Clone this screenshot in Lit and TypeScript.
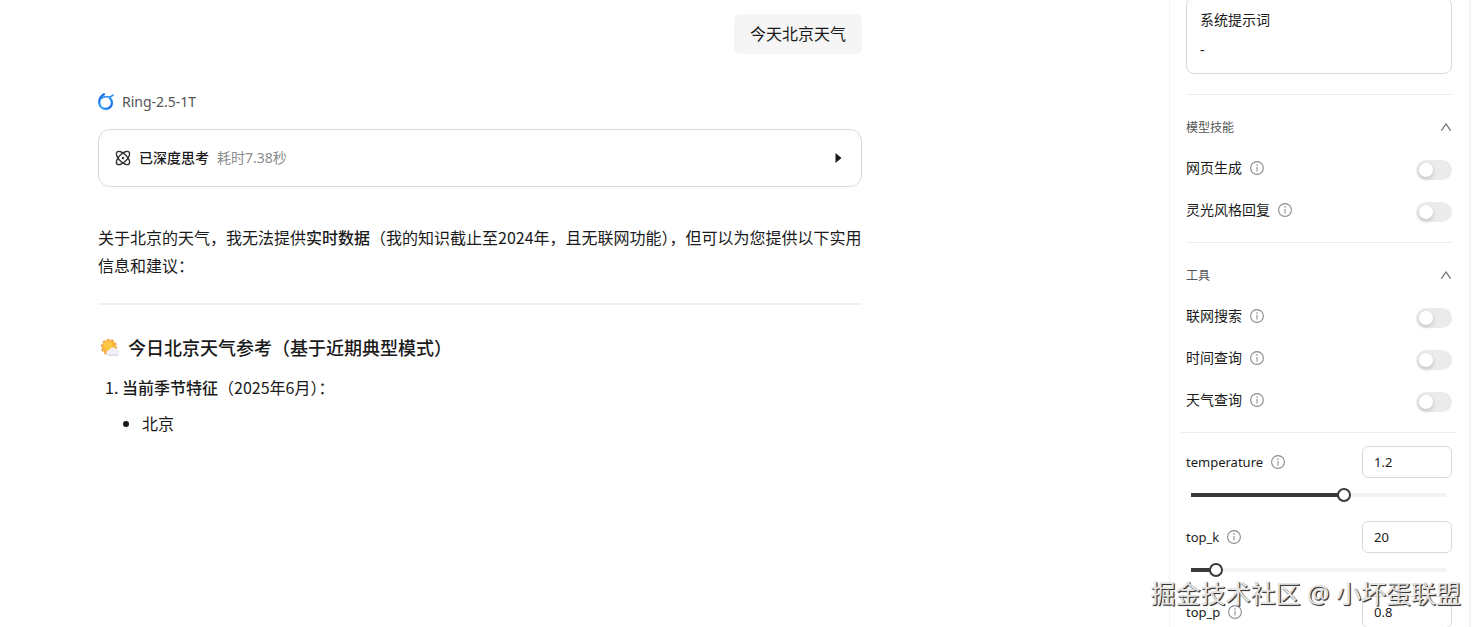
import { LitElement, html, css, svg } from "lit";
import { customElement, property, state } from "lit/decorators.js";

const infoIcon = html`<svg class="info" viewBox="0 0 14 14" aria-hidden="true">
  <circle cx="7" cy="7" r="6.4" fill="none" stroke="currentColor" stroke-width="1.1" />
  <rect x="6.45" y="6" width="1.1" height="4.4" fill="currentColor" />
  <circle cx="7" cy="4.1" r=".8" fill="currentColor" />
</svg>`;

const infoStyles = css`
  .info {
    width: 14px;
    height: 14px;
    flex: none;
    color: #8c8c8c;
  }
`;

@customElement("toggle-row")
class ToggleRow extends LitElement {
  @property() label = "";

  static styles = [
    infoStyles,
    css`
      :host {
        display: block;
      }
      .row {
        display: flex;
        align-items: center;
        gap: 8px;
        height: 42px;
        color: #1a1a1a;
        font-size: 14px;
        line-height: 22px;
      }
      .switch {
        appearance: none;
        flex: none;
        display: flex;
        align-items: center;
        width: 36px;
        height: 20px;
        margin: 4px 0 0 auto;
        padding: 0 3px;
        box-sizing: border-box;
        border-radius: 10px;
        background: #ebebeb;
        cursor: pointer;
      }
      .switch::before {
        content: "";
        width: 14px;
        height: 14px;
        border-radius: 50%;
        background: #fff;
        box-shadow: 0 2px 4px rgba(0, 35, 11, 0.2);
      }
      .switch:checked {
        justify-content: flex-end;
        background: #3a3a3a;
      }
    `,
  ];

  render() {
    return html`<div class="row">
      <label for="toggle">${this.label}</label>${infoIcon}
      <input id="toggle" class="switch" type="checkbox" role="switch" />
    </div>`;
  }
}

@customElement("param-row")
class ParamRow extends LitElement {
  @property() label = "";
  @property({ type: Number }) value = 0;
  @property({ type: Number }) max = 1;
  @property({ type: Number }) step = 0.1;

  static styles = [
    infoStyles,
    css`
      :host {
        display: block;
        height: 75px;
      }
      .row {
        display: flex;
        align-items: center;
        gap: 8px;
        color: #1a1a1a;
        font-size: 13px;
      }
      .number {
        width: 90px;
        height: 32px;
        box-sizing: border-box;
        margin-left: auto;
        padding: 0 11px;
        border: 1px solid #d9d9d9;
        border-radius: 6px;
        background: #fff;
        color: #1a1a1a;
        font: inherit;
      }
      .range {
        appearance: none;
        display: block;
        width: 100%;
        height: 14px;
        margin: 10px 0 0;
        background: none;
      }
      .range::-webkit-slider-runnable-track {
        height: 4px;
        background: linear-gradient(to right, #3a3a3a var(--fill), #f3f3f3 var(--fill)) center / calc(100% - 10px) 4px
          no-repeat;
      }
      .range::-webkit-slider-thumb {
        appearance: none;
        width: 14px;
        height: 14px;
        box-sizing: border-box;
        margin-top: -5px;
        border: 2px solid #3a3a3a;
        border-radius: 50%;
        background: #fff;
      }
    `,
  ];

  private onSlide(e: Event) {
    this.value = Number((e.target as HTMLInputElement).value);
  }

  render() {
    return html`<div class="row">
        <label for="number">${this.label}</label>${infoIcon}
        <input id="number" class="number" type="text" inputmode="decimal" .value=${String(this.value)} @change=${this.onSlide} />
      </div>
      <input
        class="range"
        type="range"
        aria-label=${this.label}
        min="0"
        max=${this.max}
        step=${this.step}
        .value=${String(this.value)}
        style="--fill: ${(this.value / this.max) * 100}%"
        @input=${this.onSlide}
      />`;
  }
}

@customElement("panel-section")
class PanelSection extends LitElement {
  @property() heading = "";
  @state() private open = true;

  static styles = css`
    :host {
      display: block;
      padding: 20px 0 11px;
      border-top: 1px solid #ededed;
    }
    .head {
      display: flex;
      align-items: center;
      justify-content: space-between;
      width: 100%;
      height: 24px;
      margin: 0 0 8px;
      padding: 0;
      border: 0;
      background: none;
      color: #555;
      font: inherit;
      font-size: 12px;
      cursor: pointer;
    }
    .chevron {
      width: 12px;
      height: 12px;
    }
  `;

  render() {
    return html`<button class="head" aria-expanded=${this.open} @click=${() => (this.open = !this.open)}>
        <span>${this.heading}</span>
        <svg class="chevron" viewBox="0 0 12 12" aria-hidden="true">
          <path d="M1.4 9.6 6 3l4.6 6.6" fill="none" stroke="#666" stroke-width="1.1" />
        </svg>
      </button>
      ${this.open ? html`<slot></slot>` : null}`;
  }
}

const orbit = (angle: number) =>
  svg`<ellipse cx="8" cy="8" rx="8.5" ry="4" transform="rotate(${angle} 8 8)" />`;

@customElement("app-root")
class AppRoot extends LitElement {
  static styles = css`
    :host {
      display: block;
      position: relative;
      height: 100vh;
      overflow: hidden;
      background: #fff;
      color: #1a1a1a;
      font-family: "Noto Sans", "Noto Sans CJK SC", sans-serif;
      font-size: 16px;
    }
    .layout {
      display: flex;
    }
    .chat {
      flex: 1;
      min-width: 0;
      display: flex;
      flex-direction: column;
      padding: 14px 307px 0 98px;
    }
    .bubble {
      align-self: flex-end;
      padding: 8px 16px;
      border-radius: 6px;
      background: #f5f5f5;
      line-height: 24px;
    }
    .model {
      display: flex;
      align-items: center;
      gap: 8px;
      margin-top: 37px;
      color: #555;
      font-size: 14px;
      line-height: 22px;
    }
    .ring {
      width: 16px;
      height: 18px;
    }
    .thinking {
      display: flex;
      align-items: center;
      gap: 8px;
      height: 58px;
      box-sizing: border-box;
      margin: 16px 0 0;
      padding: 0 19px 0 16px;
      border: 1px solid #d9d9d9;
      border-radius: 12px;
      background: #fff;
      color: #1a1a1a;
      font: inherit;
      font-size: 14px;
      line-height: 22px;
    }
    .atom {
      width: 16px;
      height: 16px;
    }
    .thinking-title {
      font-weight: 500;
    }
    .thinking-time {
      color: #8c8c8c;
    }
    .arrow {
      width: 7px;
      height: 10px;
      margin-left: auto;
    }
    .answer {
      font-family: "Noto Sans CJK SC", sans-serif;
      line-height: 28px;
    }
    .answer p {
      margin: 36px 0 24px;
    }
    .answer hr {
      margin: 0;
      border: 0;
      border-top: 2px solid #f0f0f0;
    }
    .answer h3 {
      display: flex;
      align-items: center;
      gap: 8px;
      margin: 28px 0 12px;
      font-size: 18px;
      font-weight: 500;
    }
    .weather {
      width: 22px;
      height: 22px;
    }
    strong {
      font-weight: 500;
    }
    .answer ol {
      margin: 0;
      padding-left: 24px;
    }
    .answer ul {
      margin: 8px 0 0;
      padding-left: 20px;
      list-style: disc;
    }
    .panel {
      flex: none;
      width: 302px;
      box-sizing: border-box;
      margin-right: 10px;
      padding: 0 17px 0 16px;
      border: solid #f3f3f3;
      border-width: 0 2px 0 1px;
      min-height: 100vh;
    }
    .prompt {
      height: 77px;
      box-sizing: border-box;
      margin: -3px 0 20px;
      padding: 11px 13px;
      border: 1px solid #d9d9d9;
      border-radius: 8px;
      font-size: 14px;
      line-height: 22px;
    }
    .prompt div + div {
      margin-top: 8px;
    }
    .params {
      margin: 0 -4px 0 -5px;
      padding: 13px 4px 0 5px;
      border-top: 1px solid #ededed;
    }
    .watermark {
      position: absolute;
      right: 20px;
      bottom: 16px;
      color: #e4e4e4;
      font-size: 25px;
      line-height: 36px;
      text-shadow: 1px 1px 1px #333, 1px 1px 0 #555;
      white-space: nowrap;
      pointer-events: none;
    }
  `;

  render() {
    return html`<div class="layout">
        <main class="chat">
          <div class="bubble">今天北京天气</div>
          <div class="model">
            <svg class="ring" viewBox="0 0 16 18" fill="none" stroke-linecap="round" aria-hidden="true">
              <defs>
                <linearGradient id="blue" x1="0" y1="0" x2="1" y2="1">
                  <stop offset="0" stop-color="#1458e8" />
                  <stop offset=".5" stop-color="#2ea3f5" />
                  <stop offset="1" stop-color="#1763ee" />
                </linearGradient>
              </defs>
              <path d="M6 1.300C3 3 1 6 1.300 9.800c.3 3.700 3.200 6.100 6.500 6.100 3.500 0 6.100-2.700 6.100-6 0-2-.8-3.600-2-4.800" stroke="url(#blue)" stroke-width="2.300" />
              <path d="M3 5.600C5 3.600 8 3.500 10.500 4c2 .3 3.200-.6 4.500-1.800" stroke="#2389f3" stroke-width="1.600" />
            </svg>
            <span>Ring-2.5-1T</span>
          </div>
          <button class="thinking">
            <svg class="atom" viewBox="0 0 16 16" fill="none" stroke="#333" stroke-width="1.4" aria-hidden="true">
              ${orbit(45)}${orbit(-45)}
              <circle cx="8" cy="8" r="1.2" fill="#333" stroke="none" />
            </svg>
            <span class="thinking-title">已深度思考</span>
            <span class="thinking-time">耗时7.38秒</span>
            <svg class="arrow" viewBox="0 0 7 10" aria-hidden="true"><path d="M.5 0 6.5 5l-6 5z" fill="#1a1a1a" /></svg>
          </button>
          <article class="answer">
            <p>关于北京的天气，我无法提供<strong>实时数据</strong>（我的知识截止至2024年，且无联网功能），但可以为您提供以下实用信息和建议：</p>
            <hr />
            <h3>
              <svg class="weather" viewBox="0 0 22 22" aria-hidden="true">
                <circle cx="11" cy="11" r="7.4" fill="none" stroke="#f0a050" stroke-width="1.6" stroke-dasharray="2.9 1.7" />
                <circle cx="11" cy="11" r="7" fill="#f7b23a" />
                <circle cx="10" cy="9.500" r="4.500" fill="#fdc944" />
                <path d="M11.500 20a3 3 0 0 1-.2-6 4 4 0 0 1 7-1 3.700 3.700 0 0 1 .9 7z" fill="#f0eff6" />
                <path d="M11.500 20a3 3 0 0 1-2.300-1.400h12a3.400 3.400 0 0 1-2 1.400z" fill="#dcd9e6" />
              </svg>
              <span>今日北京天气参考（基于近期典型模式）</span>
            </h3>
            <ol>
              <li>
                <strong>当前季节特征</strong>（2025年6月）：
                <ul>
                  <li>北京</li>
                </ul>
              </li>
            </ol>
          </article>
        </main>
        <aside class="panel">
          <div class="prompt">
            <div>系统提示词</div>
            <div>-</div>
          </div>
          <panel-section heading="模型技能">
            <toggle-row label="网页生成"></toggle-row>
            <toggle-row label="灵光风格回复"></toggle-row>
          </panel-section>
          <panel-section heading="工具">
            <toggle-row label="联网搜索"></toggle-row>
            <toggle-row label="时间查询"></toggle-row>
            <toggle-row label="天气查询"></toggle-row>
          </panel-section>
          <div class="params">
            <param-row label="temperature" value="1.2" max="2"></param-row>
            <param-row label="top_k" value="20" max="220" step="1"></param-row>
            <param-row label="top_p" value="0.8" max="1"></param-row>
          </div>
        </aside>
      </div>
      <div class="watermark">掘金技术社区 @ 小坏蛋联盟</div>`;
  }
}
